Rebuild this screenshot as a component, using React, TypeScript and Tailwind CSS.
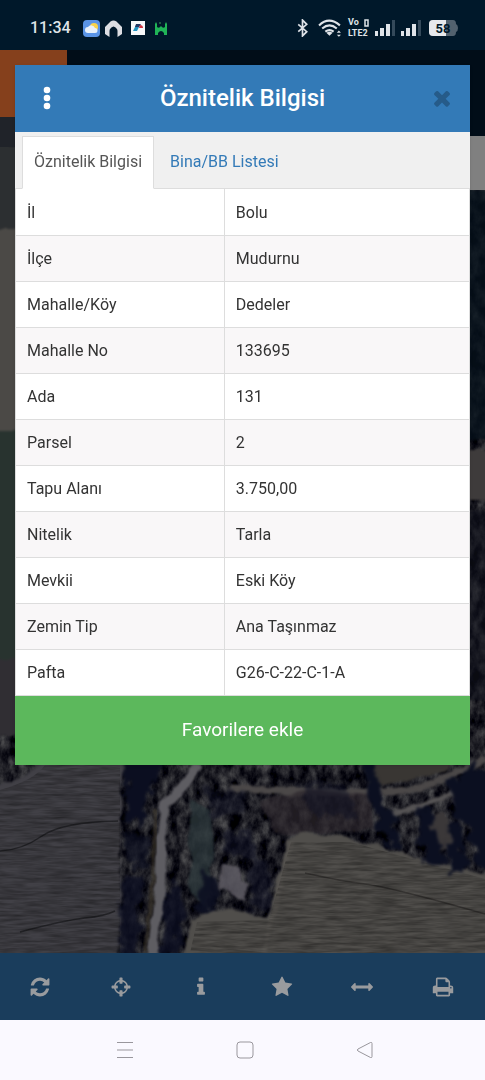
import { useState } from "react";

const details = [
  { label: "İl", value: "Bolu" },
  { label: "İlçe", value: "Mudurnu" },
  { label: "Mahalle/Köy", value: "Dedeler" },
  { label: "Mahalle No", value: "133695" },
  { label: "Ada", value: "131" },
  { label: "Parsel", value: "2" },
  { label: "Tapu Alanı", value: "3.750,00" },
  { label: "Nitelik", value: "Tarla" },
  { label: "Mevkii", value: "Eski Köy" },
  { label: "Zemin Tip", value: "Ana Taşınmaz" },
  { label: "Pafta", value: "G26-C-22-C-1-A" },
];

const tabs = ["Öznitelik Bilgisi", "Bina/BB Listesi"];

const timesPath =
  "M1490 1322q0 40-28 68l-136 136q-28 28-68 28t-68-28l-294-294-294 294q-28 28-68 28t-68-28l-136-136q-28-28-28-68t28-68l294-294-294-294q-28-28-28-68t28-68l136-136q28-28 68-28t68 28l294 294 294-294q28-28 68-28t68 28l136 136q28 28 28 68t-28 68l-294 294 294 294q28 28 28 68z";

const tools = [
  {
    title: "Yenile",
    path: "M1639 1056q0 5-1 7-64 268-268 434.5t-478 166.5q-146 0-282.5-55t-243.5-157l-129 129q-19 19-45 19t-45-19-19-45v-448q0-26 19-45t45-19h448q26 0 45 19t19 45-19 45l-137 137q71 66 161 102t187 36q134 0 250-65t186-179q11-17 53-117 8-23 30-23h192q13 0 22.5 9.5t9.5 22.5zm25-800v448q0 26-19 45t-45 19h-448q-26 0-45-19t-19-45 19-45l138-138q-148-137-349-137-134 0-250 65t-186 179q-11 17-53 117-8 23-30 23h-199q-13 0-22.5-9.5t-9.5-22.5v-7q65-268 270-434.5t480-166.5q146 0 284 55.5t245 156.5l130-129q19-19 45-19t45 19 19 45z",
  },
  {
    title: "Konum",
    path: "M1325 1024h-109q-26 0-45-19t-19-45v-128q0-26 19-45t45-19h109q-32-108-112.5-188.5t-188.5-112.5v109q0 26-19 45t-45 19h-128q-26 0-45-19t-19-45v-109q-108 32-188.5 112.5t-112.5 188.5h109q26 0 45 19t19 45v128q0 26-19 45t-45 19h-109q32 108 112.5 188.5t188.5 112.5v-109q0-26 19-45t45-19h128q26 0 45 19t19 45v109q108-32 188.5-112.5t112.5-188.5zm339-192v128q0 26-19 45t-45 19h-143q-37 161-154.5 278.5t-278.5 154.5v143q0 26-19 45t-45 19h-128q-26 0-45-19t-19-45v-143q-161-37-278.5-154.5t-154.5-278.5h-143q-26 0-45-19t-19-45v-128q0-26 19-45t45-19h143q37-161 154.5-278.5t278.5-154.5v-143q0-26 19-45t45-19h128q26 0 45 19t19 45v143q161 37 278.5 154.5t154.5 278.5h143q26 0 45 19t19 45z",
  },
  {
    title: "Bilgi",
    path: "M1216 1344v128q0 26-19 45t-45 19h-512q-26 0-45-19t-19-45v-128q0-26 19-45t45-19h64v-384h-64q-26 0-45-19t-19-45v-128q0-26 19-45t45-19h384q26 0 45 19t19 45v576h64q26 0 45 19t19 45zm-128-1152v192q0 26-19 45t-45 19h-256q-26 0-45-19t-19-45v-192q0-26 19-45t45-19h256q26 0 45 19t19 45z",
  },
  {
    title: "Favoriler",
    path: "M1728 647q0 22-26 48l-363 354 86 500q1 7 1 20 0 21-10.5 35.5t-30.5 14.5q-19 0-40-12l-449-236-449 236q-22 12-40 12-21 0-31.5-14.5t-10.5-35.5q0-6 2-20l86-500-364-354q-25-27-25-48 0-37 56-46l502-73 225-455q19-41 49-41t49 41l225 455 502 73q56 9 56 46z",
  },
  {
    title: "Ölçüm",
    path: "M1792 896q0 26-19 45l-256 256q-19 19-45 19t-45-19-19-45v-128h-1024v128q0 26-19 45t-45 19-45-19l-256-256q-19-19-19-45t19-45l256-256q19-19 45-19t45 19 19 45v128h1024v-128q0-26 19-45t45-19 45 19l256 256q19 19 19 45z",
  },
  {
    title: "Yazdır",
    path: "M448 1536h896v-256h-896v256zm0-640h896v-384h-160q-40 0-68-28t-28-68v-160h-640v640zm1152 64q0-26-19-45t-45-19-45 19-19 45 19 45 45 19 45-19 19-45zm128 0v416q0 13-9.5 22.5t-22.5 9.5h-224v160q0 40-28 68t-68 28h-960q-40 0-68-28t-28-68v-160h-224q-13 0-22.5-9.5t-9.5-22.5v-416q0-79 56.5-135.5t135.5-56.5h64v-544q0-40 28-68t68-28h672q40 0 88 20t76 48l152 152q28 28 48 76t20 88v256h64q79 0 135.5 56.5t56.5 135.5z",
  },
];

const Signal = () => (
  <svg width="20" height="17" viewBox="0 0 20 17" fill="#dfe3e8" aria-hidden="true">
    <rect x="0" y="11" width="3" height="5" />
    <rect x="5" y="8" width="4" height="8" />
    <rect x="11" y="4" width="4" height="12" />
    <rect x="17" y="0" width="3" height="16" fill="#34495a" />
  </svg>
);

const StatusBar = () => (
  <div className="h-[50px] shrink-0 bg-[#00182a] pt-1.5 pl-[30px] pr-[27px] flex items-center justify-between text-[#dfe3e8]">
    <div className="flex items-center gap-[5px]">
      <span className="w-[48px] text-base font-medium">11:34</span>
      <svg width="17" height="17" viewBox="0 0 17 17" aria-hidden="true">
        <rect width="17" height="17" rx="4" fill="#5a94e6" />
        <circle cx="11" cy="7" r="4" fill="#f8d34a" />
        <path d="M5 13a3 3 0 0 1 0-6 4 4 0 0 1 7 1 2.500 2.500 0 0 1 0 5z" fill="#e9f1fa" />
      </svg>
      <svg width="17" height="17" viewBox="0 0 17 17" fill="#dcdde2" aria-hidden="true">
        <path d="M0 7 5.500 1.500q3-2 6 0L17 7v7l-4.500 3V11q0-3-4-4.500-4 1.500-4 4.500v6L0 14z" />
      </svg>
      <svg className="ml-1" width="14" height="14" viewBox="0 0 14 14" aria-hidden="true">
        <rect width="14" height="14" fill="#f7f8fa" />
        <path d="M5 4h4L6 10H2z" fill="#2293c0" />
        <path d="M5 3h5L8 6H4z" fill="#243a66" />
        <path d="M9 4q3 0 3 3H8z" fill="#cf3341" />
      </svg>
      <svg className="ml-1" width="14" height="15" viewBox="0 0 14 15" aria-hidden="true">
        <path d="M1 14V3l1-2 1 2v3q2 2 4-1 2 3 4 1V3l1-2 1 2v11h-3v-2q-3-4-6 0v2z" fill="#20b457" />
        <circle cx="6" cy="2" r="1" fill="#2a714a" />
      </svg>
    </div>
    <div className="flex items-center gap-[6px]">
      <svg width="11" height="18" viewBox="0 0 10 17" fill="none" stroke="#dfe3e8" strokeWidth="1.600" aria-hidden="true">
        <path d="m1 5 8 7-4 4V1l4 4-8 7" />
      </svg>
      <svg className="ml-1" width="24" height="18" viewBox="0 0 23 17" fill="none" stroke="#dfe3e8" strokeWidth="2" aria-hidden="true">
        <path d="M1 6q9.500-9 20 0M4 9q7-6 14 0M7 12q4-3 8 0" />
        <path d="m8 13 3 3 3-3q-3-2-6 0z" fill="#dfe3e8" stroke="none" />
        <path d="m18 13 2-2 2 2zm0 2h4l-2 2z" fill="#dfe3e8" stroke="none" />
      </svg>
      <div className="w-[21px] text-[9px] leading-[11px] font-bold whitespace-nowrap">
        <div className="flex items-center justify-between">
          <span>Vo</span>
          <svg width="5" height="8" viewBox="0 0 5 8" fill="none" stroke="currentColor" strokeWidth="1.500">
            <path d="M1 1h3v6H1z" />
          </svg>
        </div>
        <div>LTE2</div>
      </div>
      <Signal />
      <Signal />
      <svg className="ml-0.5" width="29" height="16" viewBox="0 0 29 16" role="img" aria-label="58">
        <path d="M4 0h20q3 0 3 4 2 1 2 4t-2 4q0 4-3 4H4q-4 0-4-4V4q0-4 4-4z" fill="#52616e" />
        <path d="M4 0h13v16H4q-4 0-4-4V4q0-4 4-4z" fill="#e6e8ec" />
        <text x="14" y="13" textAnchor="middle" fontSize="13" fontWeight="700" fill="#00182a">
          58
        </text>
      </svg>
    </div>
  </div>
);

// satellite imagery, dimmed by the modal backdrop
const MapBackground = () => (
  <svg
    className="absolute inset-0 w-full h-full"
    viewBox="0 50 485 903"
    preserveAspectRatio="xMidYMin slice"
    aria-hidden="true"
  >
    <defs>
      <filter id="rough" x="-20%" y="-20%" width="140%" height="140%" colorInterpolationFilters="sRGB">
        <feTurbulence type="fractalNoise" baseFrequency="0.09" numOctaves="3" seed="4" />
        <feDisplacementMap in="SourceGraphic" scale="22" xChannelSelector="R" yChannelSelector="G" />
        <feGaussianBlur stdDeviation="1.400" />
      </filter>
      <filter id="edge" x="-20%" y="-20%" width="140%" height="140%" colorInterpolationFilters="sRGB">
        <feTurbulence type="fractalNoise" baseFrequency="0.06" numOctaves="2" seed="7" />
        <feDisplacementMap in="SourceGraphic" scale="8" xChannelSelector="R" yChannelSelector="G" />
        <feGaussianBlur stdDeviation="1" />
      </filter>
      <filter id="grove" x="0" y="0" width="100%" height="100%" colorInterpolationFilters="sRGB">
        <feTurbulence type="fractalNoise" baseFrequency="0.1 0.07" numOctaves="4" seed="9" />
        <feColorMatrix values="0.55 0 0 0 -0.16  0.55 0 0 0 -0.16  0.5 0 0 0 -0.11  0 0 0 0 1" />
        <feComposite in2="SourceGraphic" operator="in" />
      </filter>
      <filter id="furrows" x="0" y="0" width="100%" height="100%" colorInterpolationFilters="sRGB">
        <feTurbulence type="fractalNoise" baseFrequency="0.04 0.35" numOctaves="3" seed="2" />
        <feColorMatrix values="0 0 0 0 0  0 0 0 0 0  0 0 0 0 0  0.6 0 0 0 -0.16" />
        <feComposite in2="SourceGraphic" operator="in" />
      </filter>
    </defs>
    <rect y="50" width="485" height="903" filter="url(#grove)" />

    <g filter="url(#edge)">
      <path d="M-20 145h60v85h-60z" fill="#2c2f31" />
      <path d="M-20 230h60v200h-60z" fill="#4b4946" />
      <path d="M-20 430h60v230h-60z" fill="#28332f" />
      <path d="M-20 660h60v75h-60z" fill="#302e33" />
      <path d="M460 190h40v250h-40z" fill="#06121b" opacity="0.800" />
      <path d="M460 450h40v50h-40z" fill="#3e3b3b" />
      <path d="M460 510h40v190h-40z" fill="#11131d" opacity="0.600" />
    </g>

    <g filter="url(#edge)">
      <path d="M-20 789q50-10 60-27h85l-4 30-2 60 3 50-6 68H-20z" fill="#414046" />
      <path d="m190 800 22 10 2 40-8 55-16-10z" fill="#2c373b" opacity="0.800" />
      <path d="M230 788q75 6 160 4 60-8 95-34" stroke="#4b4848" strokeWidth="7" fill="none" />
      <path d="M390 815q40-10 65-25" stroke="#555354" strokeWidth="5" fill="none" />
      <path d="m365 755 85 0 0 16-80 17z" fill="#393633" />
      <path d="m260 800 50-10 60 5 5 35-100 5z" fill="#2d282e" opacity="0.700" />
      <path d="m425 820 20-8 15 40-25-5z" fill="#3b3839" />
      <path d="m450 800 25-15 8 20-15 15z" fill="#39353a" />
    </g>

    <g filter="url(#rough)" fill="#0b0e20">
      <path d="m125 760 36 0-6 26-10 18-3 20-14-6z" />
      <path d="m124 830 24 10-2 30-20-5z" opacity="0.700" />
      <path d="m122 880 20-6-4 84h-18z" opacity="0.800" />
      <path d="m168 880 16 6-4 70h-20z" opacity="0.800" />
      <path d="m204 870 14 10-5 32-16 2z" opacity="0.900" />
      <path d="m202 790 40 0 4 20-30 10z" opacity="0.500" />
      <path d="m222 835 30-5 6 30-26-4z" opacity="0.600" />
      <path d="m250 860 18 0 2 50-22 0z" opacity="0.600" />
      <path d="m300 785 50 0 6 34-46-6z" opacity="0.500" />
    </g>

    <path d="M198 764 182 788 165 804 161 832 161 870 157 914 152 956" stroke="#5e5d62" strokeWidth="10" strokeLinejoin="round" fill="none" filter="url(#edge)" />
    <path d="m155 810-2 70-8 73" stroke="#393329" strokeWidth="4" fill="none" opacity="0.700" filter="url(#edge)" />
    <path d="M287 842 300 832 350 838 430 860 500 878V970H182L192 920 220 908 267 918 275 895z" fill="#504e4b" filter="url(#edge)" />
    <path d="m292 840-14 52-14 60" stroke="#5c5955" strokeWidth="5" fill="none" opacity="0.500" filter="url(#edge)" />
    <path d="M305 873q35 8 60 11t120 30" stroke="#373533" strokeWidth="1.500" fill="none" />
    <path d="M0 851q22-1 42-15t76-15M20 932q45-12 65-14t30-7" stroke="#242428" strokeWidth="1.500" fill="none" />
    <path d="M0 790q35-10 45-25h75v188H0z" filter="url(#furrows)" />
    <path d="M291 842 350 842 485 879V953H190L197 922 269 920z" filter="url(#furrows)" />

    <g filter="url(#rough)" fill="#0b0f20">
      <path d="m362 762 10 0 14 44 12 12 2 30-22-20z" />
      <path d="m380 820 18-4 2 34-12-4z" />
      <path d="m420 805 10 5 16 50-18 6-10-30z" />
      <path d="m452 780 20-12h30v105l-25-5-8-40-16-18z" />
      <path d="m446 822 12 0 10 46-20 2z" />
    </g>
    <path d="m222 864 18 3 0 12 8 4-4 16-20-10-6 2z" fill="#5f5c64" opacity="0.850" filter="url(#edge)" />

    <rect y="50" width="485" height="86" fill="#010d18" />
    <rect y="117" width="67" height="30" fill="#202329" />
    <rect y="50" width="67" height="67" fill="#85401c" />
    <rect x="430" y="136" width="55" height="54" fill="#808080" />
  </svg>
);

const App = () => {
  const [activeTab, setActiveTab] = useState(tabs[0]);

  return (
    <div className="min-h-screen flex flex-col font-[Roboto,sans-serif] text-[#333333]">
      <StatusBar />

      <main className="relative flex-1 p-[15px] bg-[#1c1c24]">
        <MapBackground />
        <section role="dialog" aria-labelledby="dialog-title" className="relative bg-white shadow-sm">
          <header className="h-[67px] px-4 pb-0.5 flex items-center justify-between bg-[#337ab7] text-white">
            <button type="button" aria-label="Menü" className="w-8 flex justify-center">
              <svg width="8" height="24" viewBox="0 0 8 24" fill="currentColor">
                <circle cx="4" cy="4" r="3.300" />
                <circle cx="4" cy="12" r="3.300" />
                <circle cx="4" cy="20" r="3.300" />
              </svg>
            </button>
            <h1 id="dialog-title" className="text-2xl font-medium">Öznitelik Bilgisi</h1>
            <button type="button" aria-label="Kapat" className="w-8 pl-2 flex justify-center text-[#265b89]">
              <svg width="24" height="24" viewBox="0 0 1792 1792" fill="currentColor">
                <path d={timesPath} />
              </svg>
            </button>
          </header>

          <div role="tablist" className="h-[57px] pt-1 pl-[7px] flex items-end bg-[#f0f0f0] border-b border-[#dddddd]">
            {tabs.map((tab) => (
              <button
                key={tab}
                type="button"
                role="tab"
                aria-selected={activeTab === tab}
                onClick={() => setActiveTab(tab)}
                className={`h-[53px] -mb-px px-[11px] pb-0.5 mr-1 border text-base ${
                  activeTab === tab
                    ? "bg-white border-[#dddddd] border-b-white text-[#555555]"
                    : "border-transparent text-[#337ab7]"
                }`}
              >
                {tab}
              </button>
            ))}
          </div>

          <table className="w-full table-fixed border-collapse text-base">
            <tbody>
              {details.map((item) => (
                <tr key={item.label} className="h-[46px] even:bg-[#f9f7f8]">
                  <th scope="row" className="w-[46%] px-[11px] pt-0.5 border border-t-0 border-[#dddddd] text-left font-normal">
                    {item.label}
                  </th>
                  <td className="px-[11px] pt-0.5 border border-t-0 border-[#dddddd]">{item.value}</td>
                </tr>
              ))}
            </tbody>
          </table>

          <button type="button" className="w-full h-[69px] bg-[#5cb85c] text-[19px] text-white">
            Favorilere ekle
          </button>
        </section>
      </main>

      <footer className="h-[67px] shrink-0 pr-0.5 grid grid-cols-6 bg-[#1a3d5c] text-[#999b9e]">
        {tools.map((tool) => (
          <button key={tool.title} type="button" aria-label={tool.title} className="flex items-center justify-center">
            <svg width="22" height="22" viewBox="0 0 1792 1792" fill="currentColor">
              <path d={tool.path} />
            </svg>
          </button>
        ))}
      </footer>

      <nav className="h-[60px] shrink-0 pl-[116px] pr-[111px] flex items-center justify-between bg-[#faf9ff] text-[#99979d]">
        <button type="button" aria-label="Son uygulamalar">
          <svg width="18" height="18" viewBox="0 0 18 18" fill="none" stroke="currentColor">
            <path d="M1 1.500h16M1 9h16M1 16.500h16" />
          </svg>
        </button>
        <button type="button" aria-label="Ana ekran">
          <svg width="18" height="18" viewBox="0 0 18 18" fill="none" stroke="currentColor">
            <rect x="1" y="1" width="16" height="16" rx="3" />
          </svg>
        </button>
        <button type="button" aria-label="Geri">
          <svg width="18" height="18" viewBox="0 0 18 18" fill="none" stroke="currentColor">
            <path d="M14.500 1.500 2 8q-1.500 1 0 2l12.500 6.500q1.500.5 1.500-1V2.500q0-1.500-1.500-1z" />
          </svg>
        </button>
      </nav>
    </div>
  );
};

export default App;
